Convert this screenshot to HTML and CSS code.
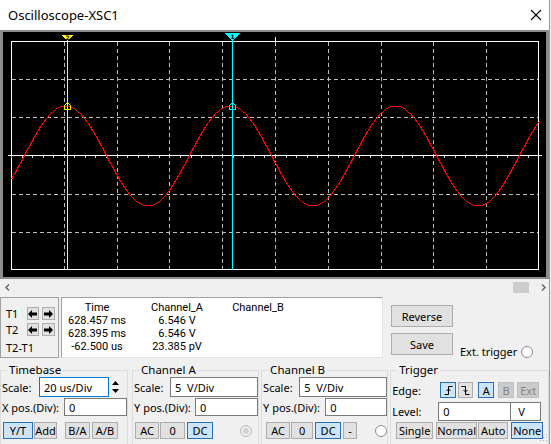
FILE: index.html
```html
<!DOCTYPE html>
<html lang="en">
<head>
    <meta charset="UTF-8">
    <meta name="viewport" content="width=device-width, initial-scale=1.0">
    <title>Oscilloscope-XSC1</title>
    <link rel="stylesheet" href="styles.css">
</head>
<body>

<div id="window">
    <div class="titlebar">
        <span class="title">Oscilloscope-XSC1</span>
        <svg class="close" width="12" height="12" viewBox="0 0 12 12">
            <path d="M1 1L11 11M11 1L1 11" stroke="#000" stroke-width="1.1" fill="none"/>
        </svg>
    </div>

    <div class="screen">
        <svg width="543" height="245" viewBox="3 32 543 245" shape-rendering="crispEdges">
            <rect x="3" y="32" width="543" height="245" fill="#000"/>
            <!-- grid -->
            <g stroke="#bdbdbd" stroke-dasharray="4 3" fill="none">
                <path d="M64.5 42V270M117.5 42V270M169.5 42V270M222.5 42V270M275.5 42V270M328.5 42V270M381.5 42V270M433.5 42V270M486.5 42V270"/>
                <path d="M12 79.5H539M12 117.5H539M12 194.5H539M12 232.5H539"/>
            </g>
            <rect x="11.5" y="41.5" width="527" height="228" fill="none" stroke="#fff"/>
            <path d="M8 155.5H542M275.5 37V41" stroke="#fff"/>
            <path d="M11 157H539" stroke="#d0d0d0" stroke-width="2" stroke-dasharray="1 9.56"/>
            <!-- channel A trace -->
            <polyline id="wave" fill="none" stroke="#ff0000"/>
            <!-- cursors -->
            <path d="M67.5 40V270" stroke="#ffff00"/>
            <polygon points="61,35 74,35 67.5,41" fill="#ffff00"/>
            <text x="67.5" y="39.5" class="cursor-num">2</text>
            <path d="M232.5 39V270" stroke="#00ffff"/>
            <polygon points="224,33 241,33 232.5,41" fill="#00ffff"/>
            <text x="232.5" y="38.5" class="cursor-num">1</text>
            <polygon points="64.5,109.5 64.5,105.5 67.5,102.5 70.5,105.5 70.5,109.5" fill="none" stroke="#ffff00"/>
            <polygon points="229.5,109.5 229.5,105.5 232.5,102.5 235.5,105.5 235.5,109.5" fill="none" stroke="#00ffff"/>
        </svg>
    </div>

    <div class="hscroll">
        <svg width="5" height="7" viewBox="0 0 5 7"><path d="M4 0.5L1 3.5L4 6.5" stroke="#606060" stroke-width="1.4" fill="none"/></svg>
        <div class="thumb"></div>
        <svg class="chev-right" width="5" height="7" viewBox="0 0 5 7"><path d="M1 0.5L4 3.5L1 6.5" stroke="#606060" stroke-width="1.4" fill="none"/></svg>
    </div>

    <div class="readout">
        <div class="cursors">
            <div class="crow first">
                <span class="clabel">T1</span>
                <button class="arrow"><svg width="9" height="8" viewBox="0 0 9 8"><path d="M0 4L4 0V2.5H9V5.5H4V8Z"/></svg></button>
                <button class="arrow"><svg width="9" height="8" viewBox="0 0 9 8"><path d="M9 4L5 0V2.5H0V5.5H5V8Z"/></svg></button>
            </div>
            <div class="crow">
                <span class="clabel">T2</span>
                <button class="arrow"><svg width="9" height="8" viewBox="0 0 9 8"><path d="M0 4L4 0V2.5H9V5.5H4V8Z"/></svg></button>
                <button class="arrow"><svg width="9" height="8" viewBox="0 0 9 8"><path d="M9 4L5 0V2.5H0V5.5H5V8Z"/></svg></button>
            </div>
            <div class="diff">T2-T1</div>
        </div>

        <div class="values">
            <span class="head">Time</span><span class="head">Channel_A</span><span class="head">Channel_B</span>
            <span>628.457 ms</span><span>6.546 V</span><span></span>
            <span>628.395 ms</span><span>6.546 V</span><span></span>
            <span>-62.500 us</span><span>23.385 pV</span><span></span>
        </div>

        <div class="actions">
            <button class="btn big">Reverse</button>
            <button class="btn big">Save</button>
        </div>

        <div class="ext">Ext. trigger <span class="radio"></span></div>
    </div>

    <div class="groups">
        <fieldset class="group timebase">
            <legend>Timebase</legend>
            <div class="row scale">
                <label class="w37">Scale:</label>
                <input class="field focus w70" type="text" value="20 us/Div" readonly>
                <div class="spin">
                    <span><svg width="7" height="4" viewBox="0 0 7 4"><path d="M0 4L3.5 0L7 4Z"/></svg></span>
                    <span><svg width="7" height="4" viewBox="0 0 7 4"><path d="M0 0L3.5 4L7 0Z"/></svg></span>
                </div>
            </div>
            <div class="row pos">
                <label class="w62">X pos.(Div):</label>
                <input class="field w63" type="text" value="0" readonly>
            </div>
            <div class="row buttons">
                <button class="btn on" style="margin-left:1px;width:30px">Y/T</button>
                <button class="btn" style="margin-left:1px;width:23px">Add</button>
                <button class="btn" style="margin-left:8px;width:25px">B/A</button>
                <button class="btn" style="margin-left:2px;width:26px">A/B</button>
            </div>
        </fieldset>

        <fieldset class="group chan-a">
            <legend>Channel A</legend>
            <div class="row scale">
                <label class="w36">Scale:</label>
                <input class="field w88" type="text" value="5  V/Div" readonly>
            </div>
            <div class="row pos">
                <label class="w61">Y pos.(Div):</label>
                <input class="field w63" type="text" value="0" readonly>
            </div>
            <div class="row buttons">
                <button class="btn" style="margin-left:1px;width:24px">AC</button>
                <button class="btn" style="margin-left:1px;width:25px">0</button>
                <button class="btn on" style="margin-left:2px;width:26px">DC</button>
                <span class="radio off" style="margin-left:27px"></span>
            </div>
        </fieldset>

        <fieldset class="group chan-b">
            <legend>Channel B</legend>
            <div class="row scale">
                <label class="w37">Scale:</label>
                <input class="field w88" type="text" value="5  V/Div" readonly>
            </div>
            <div class="row pos">
                <label class="w63">Y pos.(Div):</label>
                <input class="field w62" type="text" value="0" readonly>
            </div>
            <div class="row buttons">
                <button class="btn" style="margin-left:3px;width:24px">AC</button>
                <button class="btn" style="margin-left:1px;width:22px">0</button>
                <button class="btn on" style="margin-left:2px;width:26px">DC</button>
                <button class="btn" style="margin-left:2px;width:14px">-</button>
                <span class="radio" style="margin-left:18px"></span>
            </div>
        </fieldset>

        <fieldset class="group trigger">
            <legend>Trigger</legend>
            <div class="row edge">
                <label class="w48">Edge:</label>
                <button class="btn on" style="width:16px">
                    <svg width="9" height="9" viewBox="0 0 9 9"><path d="M0.5 8.5H4.5V0.5H8.5M2.5 5L4.5 3L6.5 5" stroke="#000" fill="none"/></svg>
                </button>
                <button class="btn" style="margin-left:2px;width:15px">
                    <svg width="9" height="9" viewBox="0 0 9 9"><path d="M0.5 0.5H4.5V8.5H8.5M2.5 4L4.5 6L6.5 4" stroke="#000" fill="none"/></svg>
                </button>
                <button class="btn on" style="margin-left:5px;width:16px">A</button>
                <button class="btn" disabled style="margin-left:4px;width:16px">B</button>
                <button class="btn" disabled style="margin-left:3px;width:22px">Ext</button>
            </div>
            <div class="row level">
                <label class="w46">Level:</label>
                <input class="field w73" type="text" value="0" readonly>
                <input class="field unit" type="text" value="V" readonly>
            </div>
            <div class="row buttons">
                <button class="btn" style="margin-left:4px;width:37px">Single</button>
                <button class="btn" style="margin-left:3px;width:41px">Normal</button>
                <button class="btn" style="margin-left:1px;width:30px">Auto</button>
                <button class="btn on" style="margin-left:3px;width:32px">None</button>
            </div>
        </fieldset>
    </div>

    <svg class="grip" width="8" height="8" viewBox="0 0 8 8">
        <g fill="#b4b4b4"><rect x="6" y="0" width="1" height="1"/><rect x="3" y="3" width="1" height="1"/><rect x="6" y="3" width="1" height="1"/><rect x="0" y="6" width="1" height="1"/><rect x="3" y="6" width="1" height="1"/><rect x="6" y="6" width="1" height="1"/></g>
    </svg>
</div>

<script>
    // channel A: 16 kHz sine, 20 us/div, 5 V/div
    const wave = document.getElementById('wave');
    const points = [];
    for (let x = 11; x <= 539; x++) {
        const y = 155.5 - 50 * Math.cos(2 * Math.PI * (x - 65) / 165);
        points.push((x + 0.5) + ',' + (Math.round(y) + 0.5));
    }
    wave.setAttribute('points', points.join(' '));
</script>

</body>
</html>
```

FILE: styles.css
```css
* {
    box-sizing: border-box;
}
body {
    margin: 0;
    width: 551px;
    height: 444px;
    overflow: hidden;
    background-color: #f0f0f0;
    font-family: "Noto Sans", sans-serif;
    font-size: 11px;
    color: #000;
}
#window {
    position: relative;
    width: 550px;
    height: 444px;
    border-right: 1px solid #9b9b9b;
}
.titlebar {
    height: 30px;
    background-color: #fff;
    display: flex;
    align-items: center;
    padding-left: 8px;
}
.title {
    font-size: 13px;
}
.close {
    margin-left: auto;
    margin-right: 7px;
}
.screen {
    width: 549px;
    height: 249px;
    border-style: solid;
    border-color: #8c8c8c;
    border-width: 2px 3px 2px 3px;
    background-color: #000;
}
.screen svg {
    display: block;
}
.cursor-num {
    font-family: "DejaVu Sans", sans-serif;
    font-size: 6px;
    font-weight: bold;
    text-anchor: middle;
    fill: #000;
}

.hscroll {
    height: 17px;
    display: flex;
    align-items: center;
    padding: 0 3px 0 5px;
}
.hscroll svg {
    display: block;
}
.thumb {
    margin-left: auto;
    width: 16px;
    height: 11px;
    background-color: #cdcdcd;
}
.chev-right {
    margin-left: 12px;
}

.readout {
    display: flex;
    height: 64px;
}
.cursors {
    width: 59px;
    height: 61px;
    margin-top: 1px;
    border: 1px solid #a0a0a0;
    padding-left: 5px;
}
.crow {
    display: flex;
    align-items: center;
    height: 13px;
    margin-top: 3px;
}
.crow.first {
    margin-top: 9px;
}
.clabel {
    width: 21px;
    line-height: 13px;
}
.arrow {
    width: 13px;
    height: 13px;
    padding: 0;
    margin-right: 3px;
    background-color: #e1e1e1;
    border: 1px solid #adadad;
    display: flex;
    align-items: center;
    justify-content: center;
}
.arrow svg {
    display: block;
}
.diff {
    margin-top: 5px;
    line-height: 14px;
}
.values {
    width: 322px;
    height: 61px;
    margin-left: 2px;
    margin-top: 1px;
    background-color: #fff;
    border: 1px solid;
    border-color: #a0a0a0 #e3e3e3 #e3e3e3 #a0a0a0;
    display: grid;
    grid-template-columns: 70px 90px 72px;
    grid-auto-rows: 13px;
    padding-top: 3px;
    font-family: Roboto, sans-serif;
    font-size: 11px;
    line-height: 13px;
    text-align: center;
}
.values .head {
    margin-bottom: 1px;
}
.actions {
    margin-left: 8px;
    display: flex;
    flex-direction: column;
}
.btn {
    font: inherit;
    padding: 0;
    height: 17px;
    line-height: 15px;
    color: #000;
    background-color: #e1e1e1;
    border: 1px solid #adadad;
    display: flex;
    align-items: center;
    justify-content: center;
}
.btn.big {
    width: 62px;
    height: 22px;
    margin-top: 9px;
}
.btn.big + .btn.big {
    margin-top: 6px;
}
.btn.on {
    background-color: #cce4f7;
    border-color: #2b6fb3;
}
.btn:disabled {
    background-color: #cccccc;
    border-color: #bfbfbf;
    color: #838383;
}
.btn svg {
    display: block;
}
.ext {
    margin-left: 7px;
    align-self: flex-end;
    margin-bottom: 1px;
    display: flex;
    align-items: center;
    line-height: 14px;
}
.radio {
    display: inline-block;
    width: 12px;
    height: 12px;
    border: 1px solid #8c8c8c;
    border-radius: 50%;
    background-color: #fff;
    margin-left: 4px;
}
.radio.off {
    border-color: #bcbcbc;
    background-color: #f0f0f0;
    box-shadow: inset 0 0 0 2px #f0f0f0, inset 0 0 0 6px #d0d0d0;
}

.groups {
    display: flex;
    margin-top: 3px;
}
.group {
    margin: 0;
    padding: 0 0 0 1px;
    border: 1px solid #dcdcdc;
    min-width: 0;
    height: 84px;
}
.group legend {
    padding: 0 2px;
    margin-left: 5px;
    line-height: 14px;
    font-size: 11.5px;
}
.timebase {
    width: 129px;
}
.chan-a {
    width: 128px;
    margin-left: 4px;
}
.chan-b {
    width: 128px;
    margin-left: 2px;
}
.trigger {
    width: 160px;
    margin-left: 2px;
}
.row {
    display: flex;
    align-items: center;
}
.row.scale {
    height: 20px;
}
.row.pos {
    height: 18px;
    margin-top: 1px;
}
.row.buttons {
    height: 17px;
    margin-top: 6px;
}
.trigger .row.buttons {
    margin-top: 1px;
}
.row.edge {
    height: 16px;
    margin-top: 5px;
}
.row.edge .btn {
    height: 16px;
}
.row.level {
    height: 19px;
    margin-top: 4px;
}
.field {
    font: inherit;
    height: 100%;
    padding: 0 0 0 4px;
    border: 1px solid #7a7a7a;
    background-color: #fff;
    color: #000;
    outline: none;
}
.field.focus {
    border-color: #0078d7;
}
.field.unit {
    width: 31px;
    margin-left: -1px;
    padding-left: 7px;
}
.spin {
    margin-left: 1px;
    width: 11px;
    height: 16px;
    display: flex;
    flex-direction: column;
    justify-content: space-around;
    align-items: center;
}
.spin span {
    display: flex;
    align-items: center;
    justify-content: center;
    width: 11px;
    height: 8px;
}
.spin svg {
    display: block;
    fill: #000;
}
.w36 { width: 36px; }
.w37 { width: 37px; }
.w46 { width: 46px; }
.w48 { width: 48px; }
.w61 { width: 61px; }
.w62 { width: 62px; }
.w63 { width: 63px; }
.w70 { width: 70px; }
.w73 { width: 73px; }
.w88 { width: 88px; }
.grip {
    position: absolute;
    right: 1px;
    bottom: 2px;
}
```
